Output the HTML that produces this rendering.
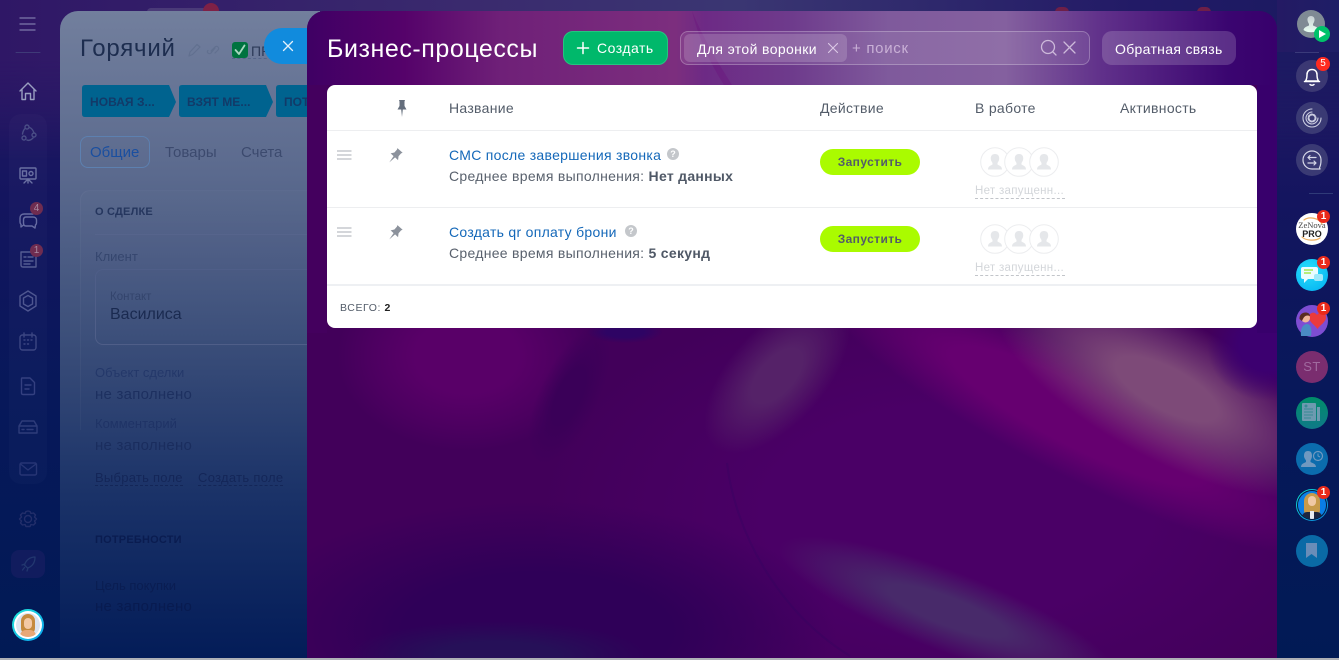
<!DOCTYPE html>
<html lang="ru"><head><meta charset="utf-8"><title>Бизнес-процессы</title>
<style>
*{box-sizing:border-box}
html,body{margin:0;padding:0;width:1339px;height:660px;overflow:hidden}
body{position:relative;font-family:"Liberation Sans",sans-serif;background:linear-gradient(180deg,#2a1a66 0,#14155f 30%,#07185a 60%,#011a55 100%)}
.a{position:absolute;white-space:nowrap}
svg{position:absolute;overflow:visible}
.ic{fill:none;stroke-linecap:round;stroke-linejoin:round}
.h{font-size:14px;color:#535c69;line-height:16px;letter-spacing:.3px}
.t{font-size:14px;line-height:16px;letter-spacing:.29px}
.go{width:100px;height:26px;border-radius:13px;background:#aafb00;color:#535c69;font-size:12px;font-weight:bold;line-height:26px;text-align:center;letter-spacing:.4px}
.nb{width:13px;height:13px;border-radius:50%;background:#ea2a1a;color:#fff;font-size:10px;font-weight:bold;line-height:13px;text-align:center}
.q{width:12px;height:12px;border-radius:50%;background:#c4c7cb;color:#fff;font-size:9px;font-weight:bold;line-height:12px;text-align:center}
.no{width:90px;height:15px;font-size:11.500px;color:#d3d6da;line-height:14px;border-bottom:1px dashed #c2c5ca;letter-spacing:.3px}
</style></head><body>

<!-- top strip -->
<div class="a" style="left:0;top:0;width:1339px;height:160px;background:linear-gradient(90deg,#2f1766 0,#3a2a6e 35%,#3a3672 55%,#221a66 85%,#1a1a60 100%);-webkit-mask-image:linear-gradient(180deg,#000 0,#000 60px,transparent 160px)"></div>
<div class="a" style="left:147px;top:8px;width:65px;height:4px;background:#4a3a78;border-radius:4px 4px 0 0"></div>
<div class="a" style="left:203px;top:3px;width:16px;height:10px;background:#7e2146;border-radius:8px 8px 0 0"></div>
<div class="a" style="left:1055px;top:7px;width:14px;height:5px;background:#6e1f48;border-radius:7px 7px 0 0"></div>
<div class="a" style="left:1197px;top:7px;width:14px;height:5px;background:#6e1f48;border-radius:7px 7px 0 0"></div>

<!-- left sidebar -->
<div class="a" style="left:9px;top:114px;width:38px;height:370px;background:rgba(255,255,255,.02);border-radius:12px"></div>
<svg width="60" height="660" style="left:0;top:0" class="ic" stroke="#8f93b8" stroke-width="1.400">
<path d="M20 18H35M20 24H35M20 30H35" stroke="#7d78aa" stroke-width="1.300"/>
<path d="M16 52.500H40" stroke="#3f3a78" stroke-width="1"/>
<path d="M20 91L28 83L36 91M22 89.500V99.500H25.500V93.500H30.500V99.500H34V89.500" stroke="#9a9fc0"/>
<g stroke="#4a4d86"><circle cx="27" cy="127" r="2"/><circle cx="24" cy="138" r="2"/><circle cx="34" cy="135" r="2"/><path d="M22.500 134C23 131 24 129.500 25 128.500M27 140C29 141 31 140 33 138M29.500 127.500C31 128 33 130 34 133"/></g>
<g stroke="#6a70a2"><rect x="20" y="168" width="16" height="11" rx="1"/><rect x="22.500" y="171" width="4" height="5"/><circle cx="31" cy="173.500" r="2"/><path d="M28 179V183M28 179L24 183M28 179L32 183"/></g>
<g stroke="#666ca2"><path d="M33 214H24C21.500 214 20 215.500 20 218V222C20 223 20.500 224 21 224.500V227L23.500 225"/><path d="M26 217H33C35 217 36.500 218 36.500 220V223C36.500 224 36 224.500 35.500 225L35 228L32 226H26C24.500 226 23.500 225 23.500 223V220C23.500 218 24.500 217 26 217Z"/></g>
<g stroke="#555c92"><path d="M21 252H36V267H23C21.500 267 21 266 21 265Z"/><path d="M24 257H26M28 257H33M24 261H33M24 264H30"/></g>
<path d="M28 291L36 296V306L28 311L20 306V296Z M28 295.500L32.500 298V304L28 306.500L23.500 304V298Z" stroke="#4e5690"/>
<g stroke="#3c4682"><rect x="20" y="335" width="16" height="15" rx="2.500"/><path d="M24 333V337M32 333V337M24 340H25M27.500 340H28.500M31 340H32M24 344H25M27.500 344H28.500"/></g>
<g stroke="#344080"><path d="M22 378H30L34.500 382.500V393C34.500 394 34 394.500 33 394.500H23C22 394.500 21.500 394 21.500 393V379C21.500 378.500 21.500 378 22 378ZM25 385H31M25 389H29"/></g>
<g stroke="#2e3c7a"><path d="M22 421H34L37 426V433H19V426ZM19 426H37M22 429.500H24M27 429.500H33"/></g>
<g stroke="#273574"><rect x="20" y="463" width="16.500" height="12" rx="1.500"/><path d="M20.500 464L28 470L36 464"/></g>
<g stroke="#222e6a"><circle cx="28" cy="519" r="3.500"/><path d="M28 511L30 511.500 31 513.500 33.500 513 35.500 515 34.500 517 36.500 519 34.500 521 35.500 523 33.500 525 31 524.500 30 526.500H26L25 524.500 22.500 525 20.500 523 21.500 521 19.500 519 21.500 517 20.500 515 22.500 513 25 513.500 26 511.500Z"/></g>
</svg>
<div class="a" style="left:11px;top:550px;width:34px;height:28px;border-radius:8px;background:#111c5e"></div>
<svg width="20" height="20" style="left:19px;top:554px" class="ic" stroke="#22376f" stroke-width="1.300"><path d="M16 3C11 3 7 6 5.500 11L8.500 14C13 12.500 16 9 16 3ZM6 10L3 11M9 14L8 17M5.500 13.500L3.500 16"/></svg>
<div class="a" style="left:30px;top:202px;width:13px;height:13px;border-radius:50%;background:#6f2c50;color:#a98aa2;font-size:10px;line-height:13px;text-align:center">4</div>
<div class="a" style="left:30px;top:244px;width:13px;height:13px;border-radius:50%;background:#6f2c50;color:#a98aa2;font-size:10px;line-height:13px;text-align:center">1</div>
<!-- bottom-left avatar -->
<div class="a" style="left:12px;top:609px;width:32px;height:32px;border-radius:50%;background:linear-gradient(135deg,#20e8d8,#0aa0f0);padding:2px"><div style="width:28px;height:28px;border-radius:50%;background:#fff;padding:2px"><div style="width:24px;height:24px;border-radius:50%;background:#dce4f0;overflow:hidden;position:relative"><div style="position:absolute;left:5px;top:1px;width:14px;height:21px;border-radius:7px;background:#c58a3e"></div><div style="position:absolute;left:8px;top:5px;width:8px;height:11px;border-radius:4px;background:#f3c9a5"></div><div style="position:absolute;left:4px;top:17px;width:16px;height:7px;border-radius:6px 6px 0 0;background:#e8a878"></div></div></div></div>

<!-- deal panel -->
<div class="a" style="left:60px;top:11px;width:260px;height:647px;border-radius:18px 0 0 0;background:linear-gradient(180deg,#727f9d 0,#5b6a8e 25%,#3c4f7a 50%,#1a3268 75%,#031c58 100%);overflow:hidden"></div>
<div class="a" style="left:80px;top:35px;font-size:24px;color:#1d2d4f;letter-spacing:.8px">Горячий</div>
<svg width="40" height="16" style="left:187px;top:42px" class="ic" stroke="#61708f" stroke-width="1.200"><path d="M2 14L3 10L10 2.500L13 5L5.500 12.500ZM24 9L28 5C30 3 33 6 31 8L28 11M28 6L24 11C22 13 19 10 21 8.500"/></svg>
<div class="a" style="left:232px;top:42px;width:16px;height:16px;background:#00733f;border-radius:3px"></div>
<svg width="16" height="16" style="left:232px;top:42px" class="ic" stroke="#a8d8c0" stroke-width="1.800"><path d="M3.500 8L7 12L12.500 3.500"/></svg>
<div class="a" style="left:251px;top:43px;font-size:14px;color:#2c3a58">ПРИ</div>
<div class="a" style="left:232px;top:58px;width:40px;border-top:1px dashed #56658a"></div>
<div class="a" style="left:264px;top:28px;width:50px;height:36px;background:#118bdd;border-radius:18px 0 0 18px"></div>
<svg width="12" height="12" style="left:282px;top:40px" class="ic" stroke="#e3f1fb" stroke-width="1.300"><path d="M1.500 1.500L10.500 10.500M10.500 1.500L1.500 10.500"/></svg>

<svg width="240" height="34" style="left:82px;top:85px"><path d="M3 0H87L94 17L87 32H3Q0 32 0 29V3Q0 0 3 0Z" fill="#00638f"/><path d="M100 0H184L191 17L184 32H100Q97 32 97 29V3Q97 0 100 0Z" fill="#00638f"/><path d="M197 0H238V32H197Q194 32 194 29V3Q194 0 197 0Z" fill="#00638f"/></svg>
<div class="a" style="left:90px;top:95px;font-size:12px;font-weight:bold;letter-spacing:.05px;color:#123a68">НОВАЯ З...</div>
<div class="a" style="left:187px;top:95px;font-size:12px;font-weight:bold;letter-spacing:.05px;color:#123a68">ВЗЯТ МЕ...</div>
<div class="a" style="left:284px;top:95px;font-size:12px;font-weight:bold;letter-spacing:.05px;color:#123a68">ПОТ</div>

<div class="a" style="left:80px;top:136px;width:70px;height:32px;border:1px solid #5d80b0;border-radius:8px"></div>
<div class="a" style="left:90px;top:144px;font-size:15px;color:#1a4fa0">Общие</div>
<div class="a" style="left:165px;top:144px;font-size:15px;color:#3c4a6e">Товары</div>
<div class="a" style="left:241px;top:144px;font-size:15px;color:#3c4a6e">Счета</div>
<div class="a" style="left:80px;top:190px;width:240px;height:240px;border-radius:10px 0 0 0;border:1px solid rgba(255,255,255,.03);border-bottom:0;background:linear-gradient(180deg,rgba(255,255,255,.015),transparent)"></div>
<div class="a" style="left:95px;top:206px;font-size:11px;font-weight:bold;letter-spacing:.2px;color:#25365e">О СДЕЛКЕ</div>
<div class="a" style="left:95px;top:234px;width:225px;border-top:1px solid #56648c"></div>
<div class="a" style="left:95px;top:249px;font-size:13px;color:#35466e">Клиент</div>
<div class="a" style="left:95px;top:269px;width:225px;height:76px;border:1px solid #4f5e88;border-radius:8px 0 0 8px;border-right:0"></div>
<div class="a" style="left:110px;top:291px;font-size:11.500px;color:#33446c">Контакт</div>
<div class="a" style="left:110px;top:306px;font-size:16px;color:#1a2a50">Василиса</div>
<div class="a" style="left:95px;top:365px;font-size:13px;color:#24386a">Объект сделки</div>
<div class="a" style="left:95px;top:386px;font-size:15px;letter-spacing:.25px;color:#1d3060">не заполнено</div>
<div class="a" style="left:95px;top:416px;font-size:13px;color:#1f3366">Комментарий</div>
<div class="a" style="left:95px;top:437px;font-size:15px;letter-spacing:.25px;color:#1a2d5e">не заполнено</div>
<div class="a" style="left:95px;top:470px;font-size:13px;letter-spacing:.25px;color:#142658;border-bottom:1px dashed #142658;line-height:15px">Выбрать поле</div>
<div class="a" style="left:198px;top:470px;font-size:13px;letter-spacing:.3px;color:#142658;border-bottom:1px dashed #142658;line-height:15px">Создать поле</div>
<div class="a" style="left:95px;top:534px;font-size:11px;font-weight:bold;letter-spacing:.2px;color:#0a1c50">ПОТРЕБНОСТИ</div>
<div class="a" style="left:95px;top:578px;font-size:13px;color:#0a1d52">Цель покупки</div>
<div class="a" style="left:95px;top:598px;font-size:15px;letter-spacing:.25px;color:#081b50">не заполнено</div>

<!-- business process panel -->
<div class="a" style="left:307px;top:11px;width:970px;height:647px;border-radius:18px 18px 0 0;overflow:hidden;background:#42005a">
<svg width="970" height="647" style="left:0;top:0;overflow:hidden">
<defs>
<linearGradient id="top" x1="0" x2="1" y1="0" y2="0"><stop offset="0" stop-color="#3f0064"/><stop offset=".1" stop-color="#55026a"/><stop offset=".2" stop-color="#6f2078"/><stop offset=".38" stop-color="#7c2e7e"/><stop offset=".41" stop-color="#6d2a85"/><stop offset=".5" stop-color="#6e3b8c"/><stop offset=".6" stop-color="#7f5a9c"/><stop offset=".72" stop-color="#84609f"/><stop offset=".82" stop-color="#60308a"/><stop offset=".95" stop-color="#3a0570"/><stop offset="1" stop-color="#38006c"/></linearGradient>
<radialGradient id="r1" gradientUnits="userSpaceOnUse" cx="0" cy="0" r="1" gradientTransform="translate(650 500) scale(420 230)"><stop offset="0" stop-color="#4a0066"/><stop offset=".45" stop-color="#4a0066"/><stop offset=".75" stop-color="#4a0066" stop-opacity=".45"/><stop offset="1" stop-color="#4a0066" stop-opacity="0"/></radialGradient>
<radialGradient id="r2" gradientUnits="userSpaceOnUse" cx="0" cy="0" r="1" gradientTransform="translate(230 620) scale(300 130)"><stop offset="0" stop-color="#2f0058"/><stop offset=".45" stop-color="#2f0058"/><stop offset=".75" stop-color="#2f0058" stop-opacity=".45"/><stop offset="1" stop-color="#2f0058" stop-opacity="0"/></radialGradient>
<radialGradient id="r3" gradientUnits="userSpaceOnUse" cx="0" cy="0" r="1" gradientTransform="translate(190 645) scale(150 35)"><stop offset="0" stop-color="#261058"/><stop offset=".4" stop-color="#261058"/><stop offset=".75" stop-color="#261058" stop-opacity=".4"/><stop offset="1" stop-color="#261058" stop-opacity="0"/></radialGradient>
<radialGradient id="r4" gradientUnits="userSpaceOnUse" cx="0" cy="0" r="1" gradientTransform="translate(160 345) scale(130 95)"><stop offset="0" stop-color="#590068"/><stop offset=".4" stop-color="#590068"/><stop offset=".75" stop-color="#590068" stop-opacity=".45"/><stop offset="1" stop-color="#590068" stop-opacity="0"/></radialGradient>
<radialGradient id="r5" gradientUnits="userSpaceOnUse" cx="0" cy="0" r="1" gradientTransform="translate(262 385) rotate(25) scale(30 75)"><stop offset="0" stop-color="#3a0058"/><stop offset=".4" stop-color="#3a0058"/><stop offset=".75" stop-color="#3a0058" stop-opacity=".4"/><stop offset="1" stop-color="#3a0058" stop-opacity="0"/></radialGradient>
<radialGradient id="r6" gradientUnits="userSpaceOnUse" cx="0" cy="0" r="1" gradientTransform="translate(318 321) scale(38 11)"><stop offset="0" stop-color="#2e0464"/><stop offset=".5" stop-color="#2e0464"/><stop offset="1" stop-color="#2e0464" stop-opacity="0"/></radialGradient>
<radialGradient id="r7" gradientUnits="userSpaceOnUse" cx="0" cy="0" r="1" gradientTransform="translate(470 365) rotate(-48) scale(95 48)"><stop offset="0" stop-color="#552268"/><stop offset=".35" stop-color="#552268"/><stop offset=".75" stop-color="#552268" stop-opacity=".4"/><stop offset="1" stop-color="#552268" stop-opacity="0"/></radialGradient>
<radialGradient id="r8" gradientUnits="userSpaceOnUse" cx="0" cy="0" r="1" gradientTransform="translate(770 405) rotate(27) scale(280 60)"><stop offset="0" stop-color="#660070"/><stop offset=".5" stop-color="#660070"/><stop offset=".8" stop-color="#660070" stop-opacity=".4"/><stop offset="1" stop-color="#660070" stop-opacity="0"/></radialGradient>
<radialGradient id="r9" gradientUnits="userSpaceOnUse" cx="0" cy="0" r="1" gradientTransform="translate(860 378) rotate(28) scale(190 70)"><stop offset="0" stop-color="#7d4a78"/><stop offset=".3" stop-color="#7d4a78"/><stop offset=".7" stop-color="#7d4a78" stop-opacity=".45"/><stop offset="1" stop-color="#7d4a78" stop-opacity="0"/></radialGradient>
<radialGradient id="r10" gradientUnits="userSpaceOnUse" cx="0" cy="0" r="1" gradientTransform="translate(960 335) scale(60 55)"><stop offset="0" stop-color="#3c0070"/><stop offset=".45" stop-color="#3c0070"/><stop offset="1" stop-color="#3c0070" stop-opacity="0"/></radialGradient>
<radialGradient id="r11" gradientUnits="userSpaceOnUse" cx="0" cy="0" r="1" gradientTransform="translate(640 600) rotate(21) scale(180 40)"><stop offset="0" stop-color="#482a6a"/><stop offset=".35" stop-color="#482a6a"/><stop offset=".75" stop-color="#482a6a" stop-opacity=".4"/><stop offset="1" stop-color="#482a6a" stop-opacity="0"/></radialGradient>
</defs>
<rect width="970" height="647" fill="url(#r1)"/>
<rect width="970" height="647" fill="url(#r2)"/>
<rect width="970" height="647" fill="url(#r3)"/>
<rect width="970" height="647" fill="url(#r4)"/>
<rect width="970" height="647" fill="url(#r5)"/>
<rect width="970" height="647" fill="url(#r6)"/>
<rect width="970" height="647" fill="url(#r7)"/>
<rect width="970" height="647" fill="url(#r8)"/>
<rect width="970" height="647" fill="url(#r9)"/>
<rect width="970" height="647" fill="url(#r10)"/>
<rect width="970" height="647" fill="url(#r11)"/>
<path d="M420 452C428 520 470 600 543 645" fill="none" stroke="#2d0260" stroke-width="2" opacity=".25"/>
<rect x="950" y="60" width="20" height="262" fill="#38006c"/>
<rect x="0" y="60" width="20" height="262" fill="#44005e"/>
<rect x="0" y="0" width="970" height="74" fill="url(#top)"/>
<path d="M385 0C392 28 402 50 417 74H425C410 50 395 25 385 0Z" fill="#6a0a7a" opacity=".3"/>
</svg>
</div>

<div class="a" style="left:327px;top:35px;font-size:25px;color:#fff;letter-spacing:.56px;line-height:29px">Бизнес-процессы</div>
<div class="a" style="left:563px;top:31px;width:105px;height:34px;border-radius:10px;background:#00b86b;border:1px solid #25c480"></div>
<svg width="12" height="12" style="left:577px;top:42px" class="ic" stroke="#fff" stroke-width="1.500"><path d="M6 .5V11.500M.5 6H11.500"/></svg>
<div class="a" style="left:597px;top:40px;font-size:14px;color:#fff;line-height:16px;letter-spacing:.5px">Создать</div>

<div class="a" style="left:680px;top:31px;width:410px;height:34px;border-radius:8px;background:rgba(255,255,255,.09);border:1px solid rgba(255,255,255,.25)"></div>
<div class="a" style="left:684px;top:34px;width:163px;height:28px;border-radius:6px;background:rgba(255,255,255,.16)"></div>
<div class="a" style="left:697px;top:41px;font-size:14px;color:#fff;line-height:16px;letter-spacing:.37px">Для этой воронки</div>
<svg width="10" height="10" style="left:828px;top:43px" class="ic" stroke="#dcc9e6" stroke-width="1.100"><path d="M.5 .5L9.500 9.500M9.500 .5L.5 9.500"/></svg>
<div class="a" style="left:852px;top:41px;font-size:15px;color:#c9b0d6;line-height:16px;letter-spacing:.7px">+ поиск</div>
<svg width="50" height="18" style="left:1040px;top:39px" class="ic" stroke="#cdb9da" stroke-width="1.300"><circle cx="8" cy="8" r="6.500"/><path d="M12.500 12.500L16 16M24 3L35 14M35 3L24 14"/></svg>

<div class="a" style="left:1102px;top:31px;width:134px;height:34px;border-radius:10px;background:rgba(255,255,255,.17)"></div>
<div class="a" style="left:1115px;top:41px;font-size:14px;color:#fff;line-height:16px;letter-spacing:.32px">Обратная связь</div>

<!-- table card -->
<div class="a" style="left:327px;top:85px;width:930px;height:243px;background:#fff;border-radius:8px"></div>
<div class="a" style="left:327px;top:130px;width:930px;height:1px;background:#edeef0"></div>
<div class="a" style="left:327px;top:207px;width:930px;height:1px;background:#edeef0"></div>
<div class="a" style="left:327px;top:284px;width:930px;height:2px;background:#eef0f3"></div>

<svg width="12" height="20" style="left:396px;top:99px"><path d="M3 1H9L8.500 2.500V7L10.500 10.500H6.800L6 18L5.200 10.500H1.500L3.500 7V2.500Z" fill="#646e7c"/></svg>
<div class="a h" style="left:449px;top:100px">Название</div>
<div class="a h" style="left:820px;top:100px">Действие</div>
<div class="a h" style="left:975px;top:100px">В работе</div>
<div class="a h" style="left:1120px;top:100px">Активность</div>

<!-- row 1 -->
<svg width="16" height="12" style="left:337px;top:150px" stroke="#c6c9ce" stroke-width="1.500"><path d="M0 1H14.500M0 5H14.500M0 9H14.500"/></svg>
<svg width="16" height="17" style="left:387px;top:148px"><g transform="rotate(42 8 8)"><path d="M4.500 .5H11.500L10.800 2V5.800L13 9H9L8 16.500L7 9H3L5.200 5.800V2Z" fill="#8c929c"/></g></svg>
<div class="a t" style="left:449px;top:147px;color:#1468b9">СМС после завершения звонка</div>
<div class="a q" style="left:667px;top:148px">?</div>
<div class="a t" style="left:449px;top:168px;color:#59616d">Среднее время выполнения: <b style="color:#4f5866">Нет данных</b></div>
<div class="a go" style="left:820px;top:149px">Запустить</div>

<!-- row 2 -->
<svg width="16" height="12" style="left:337px;top:227px" stroke="#c6c9ce" stroke-width="1.500"><path d="M0 1H14.500M0 5H14.500M0 9H14.500"/></svg>
<svg width="16" height="17" style="left:387px;top:225px"><g transform="rotate(42 8 8)"><path d="M4.500 .5H11.500L10.800 2V5.800L13 9H9L8 16.500L7 9H3L5.200 5.800V2Z" fill="#8c929c"/></g></svg>
<div class="a t" style="left:449px;top:224px;color:#1468b9">Создать qr оплату брони</div>
<div class="a q" style="left:625px;top:225px">?</div>
<div class="a t" style="left:449px;top:245px;color:#59616d">Среднее время выполнения: <b style="color:#4f5866">5 секунд</b></div>
<div class="a go" style="left:820px;top:226px">Запустить</div>

<!-- workers -->
<svg width="80" height="32" style="left:980px;top:147px"><defs><g id="u"><circle cx="15" cy="15" r="14.300" fill="#fff" stroke="#ecedef" stroke-width="1"/><path d="M15 7C18 7 19.500 9 19.200 12C19 14 18 15 17.500 16V17.500C19 18.500 22 19 22 22.500H8C8 19 11 18.500 12.500 17.500V16C12 15 11 14 10.800 12C10.500 9 12 7 15 7Z" fill="#e5e7ea"/></g></defs><use href="#u" x="0" y="0"/><use href="#u" x="24" y="0"/><use href="#u" x="49" y="0"/></svg>
<svg width="80" height="32" style="left:980px;top:224px"><use href="#u" x="0" y="0"/><use href="#u" x="24" y="0"/><use href="#u" x="49" y="0"/></svg>
<div class="a no" style="left:975px;top:184px">Нет запущенн...</div>
<div class="a no" style="left:975px;top:261px">Нет запущенн...</div>

<div class="a" style="left:340px;top:302px;font-size:10.500px;color:#535c69;line-height:12px;letter-spacing:.6px">ВСЕГО: <b style="color:#222">2</b></div>

<!-- right sidebar -->
<div class="a" style="left:1277px;top:0;width:62px;height:52px;background:linear-gradient(90deg,#241a64,#1e1e66)"></div>
<div class="a" style="left:1295px;top:52px;width:24px;height:1px;background:#3a3a7a"></div>
<div class="a" style="left:1297px;top:10px;width:28px;height:28px;border-radius:50%;background:#7f8a94"></div>
<svg width="28" height="28" style="left:1297px;top:10px"><defs><linearGradient id="fg" x1="0" x2="0" y1="0" y2="1"><stop offset="0" stop-color="#c8d0d4"/><stop offset="1" stop-color="#e8fff2"/></linearGradient></defs><path d="M14 6C16.500 6 17.800 7.800 17.500 10.300C17.300 12 16.500 13 16 14V15.500C17.500 16.300 21 17 21.500 20C18 23 10 23 6.500 20C7 17 10.500 16.300 12 15.500V14C11.500 13 10.700 12 10.500 10.300C10.200 7.800 11.500 6 14 6Z" fill="url(#fg)"/></svg>
<div class="a" style="left:1314px;top:26px;width:16px;height:16px;border-radius:50%;background:#00c26a"></div>
<svg width="8" height="8" style="left:1319px;top:30px"><path d="M0 0L7 4L0 8Z" fill="#fff"/></svg>

<div class="a" style="left:1296px;top:60px;width:32px;height:32px;border-radius:50%;background:#3b3873"></div>
<svg width="20" height="22" style="left:1302px;top:66px" class="ic" stroke="#fff" stroke-width="1.500"><path d="M3.500 15C5 13 5 11 5 8.500C5 5.500 7 3.500 10 3.500C13 3.500 15 5.500 15 8.500C15 11 15 13 16.500 15ZM2.500 15.500H17.500M8 18.500C9 19.500 11 19.500 12 18.500"/></svg>
<div class="a" style="left:1316px;top:57px;width:14px;height:14px;border-radius:50%;background:#ff2b20;color:#fff;font-size:10px;line-height:14px;text-align:center">5</div>

<div class="a" style="left:1296px;top:102px;width:32px;height:32px;border-radius:50%;background:#3a3a74"></div>
<svg width="24" height="24" style="left:1300px;top:106px" class="ic" stroke="#c9cbe0" stroke-width="1.100"><path d="M12 3C7 3 3 7 3 12C3 17 7 21 12 21C17 21 21 17 21 12"/><path d="M12 6C9 6 6 9 6 12C6 15.500 9 18 12 18C15 18 18 15 18 12"/><circle cx="12" cy="12" r="3.500" stroke-width="2" stroke-dasharray="1.500 1.500"/></svg>

<div class="a" style="left:1296px;top:144px;width:32px;height:32px;border-radius:50%;background:#3a3a74"></div>
<svg width="24" height="24" style="left:1300px;top:148px" class="ic" stroke="#d6d8e8" stroke-width="1.200"><path d="M19.500 19.500C21 17 21 15 21 12C21 7 17 3 12 3C7 3 3 7 3 12C3 17 7 21 12 21H20ZM8 9.500H16M8 9.500L10 7.500M8 9.500L10 11.500M16 15H8M16 15L14 13M16 15L14 17"/></svg>

<div class="a" style="left:1309px;top:193px;width:24px;height:1px;background:#2f3a78"></div>

<div class="a" style="left:1296px;top:213px;width:32px;height:32px;border-radius:50%;background:#fff;overflow:hidden;text-align:center;line-height:9px;font-family:'Liberation Serif',serif;color:#444"><div style="font-size:8.500px;margin-top:8px">ZeNova</div><div style="font-size:9px;font-weight:bold;color:#222;font-family:'Liberation Sans',sans-serif">PRO</div></div>
<svg width="32" height="32" style="left:1296px;top:213px" class="ic" stroke="#f0b060" stroke-width="1.200"><path d="M8 7C13 3 23 5 26 11M6 24C10 28 20 28 24 25"/></svg>
<div class="a" style="left:1296px;top:259px;width:32px;height:32px;border-radius:50%;background:radial-gradient(circle at 40% 35%,#29dffa,#00aef2)"></div>
<svg width="24" height="20" style="left:1300px;top:267px"><rect x="1" y="0" width="17" height="12" rx="2" fill="#eafcff"/><path d="M4 12V16L8 12Z" fill="#eafcff"/><rect x="14" y="7" width="9" height="7" rx="2" fill="#9fe8fa"/><path d="M4 3H13M4 6H11" stroke="#a5e84f" stroke-width="1.600"/></svg>
<div class="a" style="left:1296px;top:305px;width:32px;height:32px;border-radius:50%;background:#7e4dd2;overflow:hidden"></div>
<svg width="32" height="32" style="left:1296px;top:305px"><path d="M21 10C23 6 30 7 30 12.500C30 17 24 20 21.500 24C19 20 13 17 13 12.500C13 7 19 6 21 10Z" fill="#ea3a3c"/><circle cx="9.500" cy="13" r="4.500" fill="#f0b69a"/><path d="M3.500 14C3 6 14 6 14 11C10 9.500 8 11 6 16Z" fill="#5a2c20"/><path d="M5 31C4 22 8 19 11 19C15 19 16 25 15 31Z" fill="#4a8bc4"/></svg>
<div class="a" style="left:1296px;top:351px;width:32px;height:32px;border-radius:50%;background:#7a2d6f;color:#a06a9f;font-size:13px;line-height:32px;text-align:center;letter-spacing:.5px">ST</div>
<div class="a" style="left:1296px;top:397px;width:32px;height:32px;border-radius:50%;background:linear-gradient(180deg,#008c68,#0f7a88)"></div>
<svg width="20" height="20" style="left:1302px;top:403px"><rect x="0" y="0" width="14" height="18" rx="1" fill="#6d9ab0"/><rect x="15" y="4" width="3" height="14" fill="#6d9ab0"/><path d="M2 6H11M2 9H11M2 12H11M2 15H9" stroke="#378a94"/><circle cx="4" cy="3" r="1.500" fill="#378a94"/></svg>
<div class="a" style="left:1296px;top:443px;width:32px;height:32px;border-radius:50%;background:#0b6cad"></div>
<svg width="24" height="22" style="left:1300px;top:449px"><path d="M8 2C11 2 12 4 12 7C12 9 11 10.500 10.500 11.500V13C12 14 16 14.500 16 18H1C1 14.500 4.500 14 6 13V11.500C5.500 10.500 4 9 4 7C4 4 5 2 8 2Z" fill="#6f99c0"/><circle cx="18" cy="7" r="4.500" fill="none" stroke="#6f99c0" stroke-width="1.200"/><path d="M18 4.500V7L20 8" fill="none" stroke="#6f99c0"/></svg>
<div class="a" style="left:1296px;top:489px;width:32px;height:32px;border-radius:50%;background:linear-gradient(135deg,#10e0d0,#0a80e0);padding:1px"><div style="width:30px;height:30px;border-radius:50%;background:#04183f;padding:1px"><div style="width:28px;height:28px;border-radius:50%;background:#0a7ee6;overflow:hidden;position:relative"><div style="position:absolute;left:6px;top:2px;width:16px;height:25px;border-radius:8px;background:#c79a4a"></div><div style="position:absolute;left:10px;top:5px;width:8px;height:10px;border-radius:4px;background:#f0c8a5"></div><div style="position:absolute;left:4px;top:21px;width:20px;height:7px;background:#1c2640;border-radius:5px 5px 0 0"></div><div style="position:absolute;left:12px;top:20px;width:4px;height:8px;background:#e8ecf2"></div></div></div></div>
<div class="a" style="left:1296px;top:535px;width:32px;height:32px;border-radius:50%;background:#0a6aa6"></div>
<svg width="12" height="16" style="left:1306px;top:543px"><path d="M0 0H11V15L5.500 11L0 15Z" fill="#6a8db8"/></svg>

<div class="a nb" style="left:1317px;top:210px">1</div>
<div class="a nb" style="left:1317px;top:256px">1</div>
<div class="a nb" style="left:1317px;top:302px">1</div>
<div class="a nb" style="left:1317px;top:486px">1</div>

<!-- bottom strip -->
<div class="a" style="left:0;top:658px;width:1339px;height:2px;background:#aeb0b6"></div>
</body></html>
